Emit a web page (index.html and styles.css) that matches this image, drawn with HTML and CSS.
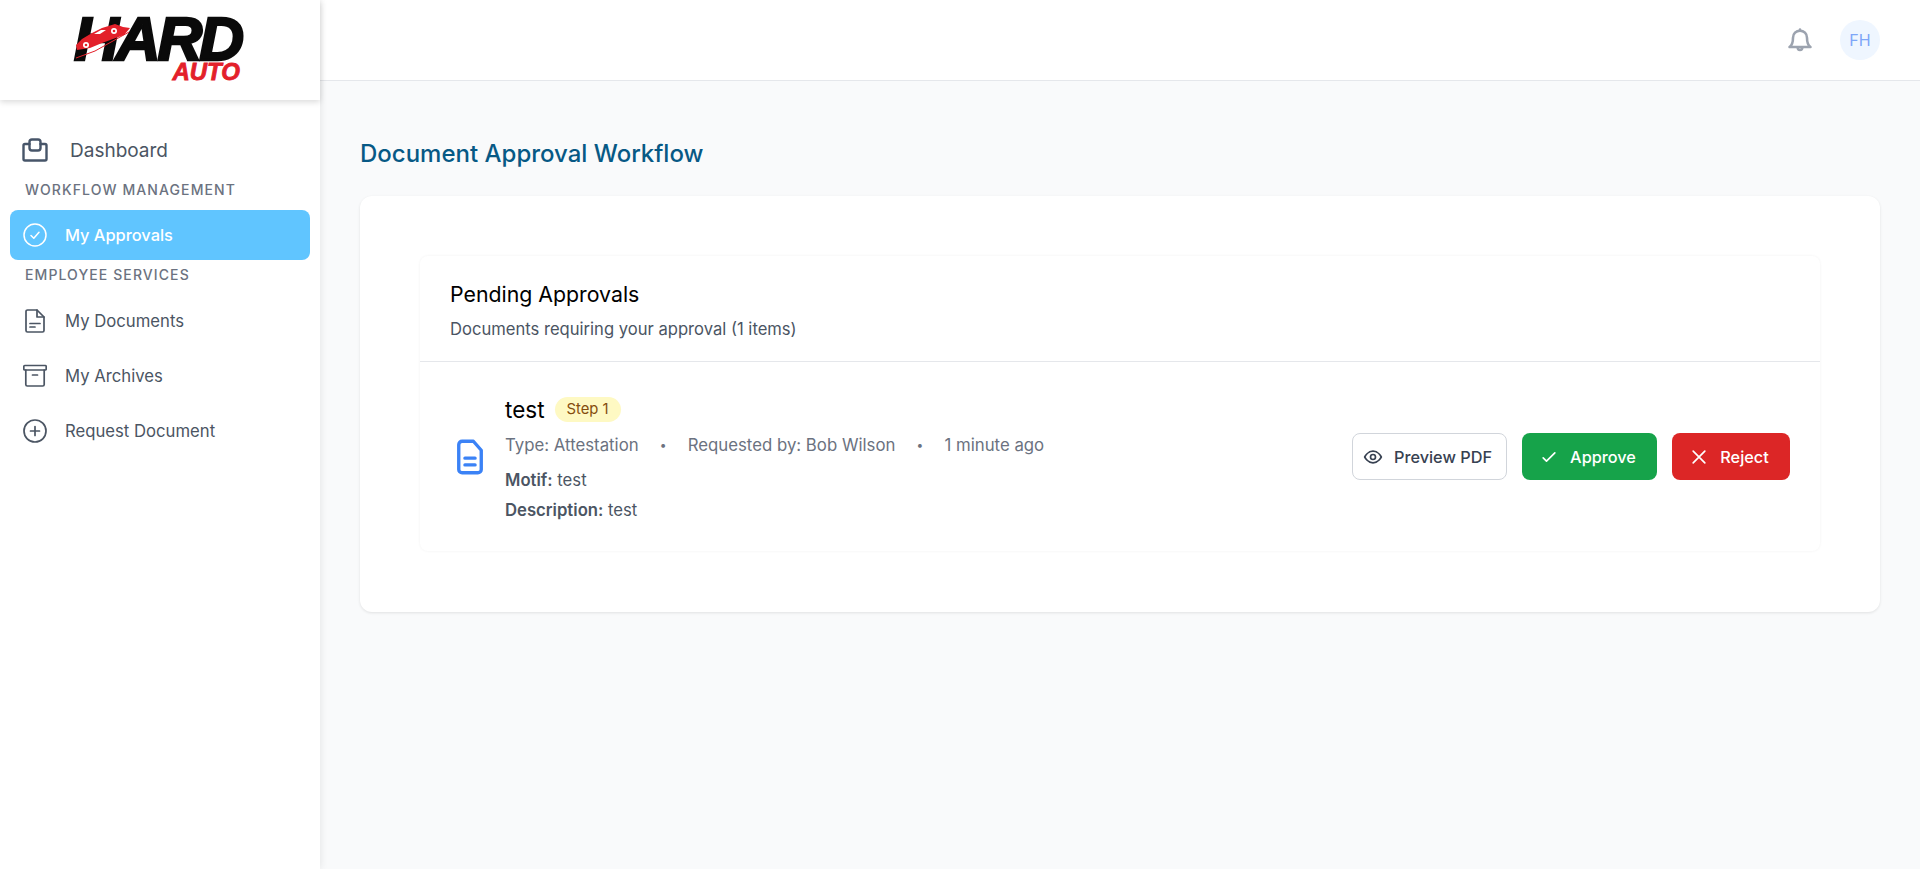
FILE: index.html
```html
<!DOCTYPE html>
<html lang="en">
<head>
<meta charset="UTF-8">
<meta name="viewport" content="width=device-width, initial-scale=1.0">
<title>Document Approval Workflow</title>
<link rel="stylesheet" href="styles.css">
</head>
<body>
  <aside class="sidebar">
    <div class="logo-box">
      <div class="logo">
        <span class="logo-hard">HARD</span>
        <span class="logo-auto">AUTO</span>
        <svg class="logo-car" viewBox="0 0 56 36" aria-hidden="true">
          <path d="M1 21 L7 15 L17 9 L27 4 L40 0 L48 3 L55 4 L49 11 L27 19 L15 24 L2 26 Z" fill="#e3202a"/>
          <path d="M1 34 L20 27 L54 8" fill="none" stroke="#e3202a" stroke-width="1"/>
          <path d="M19 10 L26 6 L31 6 L25 10 Z" fill="#fff"/>
          <circle cx="11" cy="21" r="3" fill="#fff"/>
          <circle cx="11" cy="21" r="1.3" fill="#e3202a"/>
          <circle cx="39" cy="7" r="3" fill="#fff"/>
          <circle cx="39" cy="7" r="1.3" fill="#e3202a"/>
        </svg>
      </div>
    </div>
    <nav class="nav">
      <a class="nav-top">
        <svg class="nav-icon-lg" viewBox="0 0 26 24" fill="none" stroke="currentColor" stroke-width="2.4" stroke-linejoin="round" stroke-linecap="round">
          <path d="M7.500 6H3a1.500 1.500 0 0 0-1.500 1.500V21A1.500 1.500 0 0 0 3 22.500h20a1.500 1.500 0 0 0 1.500-1.500V7.500A1.500 1.500 0 0 0 23 6h-4.500"/>
          <rect x="7.500" y="1.500" width="11" height="11" rx="2.500"/>
        </svg>
        <span>Dashboard</span>
      </a>
      <div class="nav-label first">Workflow Management</div>
      <a class="nav-item active">
        <svg class="nav-icon" viewBox="0 0 24 24" fill="none" stroke="currentColor" stroke-width="1.500" stroke-linecap="round" stroke-linejoin="round">
          <circle cx="12" cy="12" r="11"/>
          <path d="M8 12.500l2.800 2.800L16 9.200"/>
        </svg>
        <span>My Approvals</span>
      </a>
      <div class="nav-label">Employee Services</div>
      <a class="nav-item">
        <svg class="nav-icon" viewBox="0 0 24 24" fill="none" stroke="currentColor" stroke-width="1.700" stroke-linecap="round" stroke-linejoin="round">
          <path d="M14 1H4.500A1.500 1.500 0 0 0 3 2.500v19A1.500 1.500 0 0 0 4.500 23h15a1.500 1.500 0 0 0 1.500-1.500V8z"/>
          <path d="M14 1v7h7"/>
          <path d="M7 14.500h10M7 18h5"/>
        </svg>
        <span>My Documents</span>
      </a>
      <a class="nav-item">
        <svg class="nav-icon" viewBox="0 0 24 24" fill="none" stroke="currentColor" stroke-width="1.700" stroke-linecap="round" stroke-linejoin="round">
          <rect x="0.800" y="1.500" width="22.400" height="4.500" rx="1"/>
          <path d="M2.800 6v14.500A1.500 1.500 0 0 0 4.300 22h15.400a1.500 1.500 0 0 0 1.500-1.500V6"/>
          <path d="M9.500 11h5"/>
        </svg>
        <span>My Archives</span>
      </a>
      <a class="nav-item">
        <svg class="nav-icon" viewBox="0 0 24 24" fill="none" stroke="currentColor" stroke-width="1.700" stroke-linecap="round">
          <circle cx="12" cy="12" r="11"/>
          <path d="M12 7.500v9M7.500 12h9"/>
        </svg>
        <span>Request Document</span>
      </a>
    </nav>
  </aside>

  <div class="main">
    <header class="topbar">
      <svg class="bell" viewBox="0 0 24 24" fill="none" stroke="currentColor" stroke-width="2.200" stroke-linecap="round" stroke-linejoin="round">
        <path d="M18 10a6 6 0 0 0-12 0c0 5-1.500 7-3 8h18c-1.500-1-3-3-3-8z"/>
        <path d="M10 18.500a2 2 0 0 0 4 0"/>
        <path d="M12 4V3"/>
      </svg>
      <div class="avatar">FH</div>
    </header>

    <main class="content">
      <h1 class="page-title">Document Approval Workflow</h1>
      <section class="panel">
        <div class="approvals">
          <div class="approvals-head">
            <h2>Pending Approvals</h2>
            <p>Documents requiring your approval (1 items)</p>
          </div>
          <div class="doc-row">
            <svg class="doc-icon" viewBox="0 0 24 32" fill="none" stroke="currentColor" stroke-width="3" stroke-linecap="round" stroke-linejoin="round">
              <path d="M15 2H5a3 3 0 0 0-3 3v22a3 3 0 0 0 3 3h14a3 3 0 0 0 3-3V10z"/>
              <path d="M7.500 17h9M7.500 23h9"/>
            </svg>
            <div class="doc-info">
              <div class="doc-title">
                <h3>test</h3>
                <span class="badge">Step 1</span>
              </div>
              <div class="doc-meta">
                <span>Type: Attestation</span>
                <span class="dot">•</span>
                <span>Requested by: Bob Wilson</span>
                <span class="dot">•</span>
                <span>1 minute ago</span>
              </div>
              <p class="doc-line"><b>Motif:</b> test</p>
              <p class="doc-line"><b>Description:</b> test</p>
            </div>
            <div class="doc-actions">
              <button class="btn btn-outline">
                <svg viewBox="0 0 24 24" fill="none" stroke="currentColor" stroke-width="2" stroke-linecap="round" stroke-linejoin="round">
                  <path d="M2 12s3.600-7 10-7 10 7 10 7-3.600 7-10 7-10-7-10-7z"/>
                  <circle cx="12" cy="12" r="3"/>
                </svg>
                Preview PDF
              </button>
              <button class="btn btn-green">
                <svg viewBox="0 0 24 24" fill="none" stroke="currentColor" stroke-width="2" stroke-linecap="round" stroke-linejoin="round">
                  <path d="M5 13l4 4L19 7"/>
                </svg>
                Approve
              </button>
              <button class="btn btn-red">
                <svg viewBox="0 0 24 24" fill="none" stroke="currentColor" stroke-width="2" stroke-linecap="round" stroke-linejoin="round">
                  <path d="M5 5l14 14M19 5L5 19"/>
                </svg>
                Reject
              </button>
            </div>
          </div>
        </div>
      </section>
    </main>
  </div>
</body>
</html>
```

FILE: styles.css
```css
* {
  box-sizing: border-box;
}

body {
  margin: 0;
  height: 100vh;
  display: flex;
  overflow: hidden;
  background-color: #f9fafb;
  font-family: Inter, "Open Sans", sans-serif;
  color: #374151;
}

h1, h2, h3, p {
  margin: 0;
  font-weight: normal;
}

.sidebar {
  width: 320px;
  flex-shrink: 0;
  height: 100vh;
  background-color: #fff;
  box-shadow: 0 0 8px rgba(0, 0, 0, 0.1);
  position: relative;
  z-index: 2;
}

.logo-box {
  height: 100px;
  display: flex;
  justify-content: center;
  padding-top: 16px;
  box-shadow: 0 2px 6px rgba(0, 0, 0, 0.15);
}

.logo {
  position: relative;
  width: 170px;
  height: 64px;
  display: flex;
  flex-direction: column;
  align-items: flex-end;
  font-family: "Liberation Sans", Arial, sans-serif;
  font-weight: bold;
  font-style: italic;
  line-height: 1;
}

.logo-hard {
  font-size: 62px;
  height: 46px;
  line-height: 46px;
  color: #0a0a0a;
  -webkit-text-stroke: 2.5px #0a0a0a;
  letter-spacing: -3px;
  padding-right: 4px;
}

.logo-auto {
  font-size: 24px;
  height: 18px;
  line-height: 20px;
  color: #e3202a;
  -webkit-text-stroke: 0.8px #e3202a;
  padding-right: 5px;
}

.logo-car {
  position: absolute;
  left: 0;
  top: 8px;
  width: 56px;
  height: 36px;
}

.nav {
  padding: 30px 10px 0;
}

.nav-top {
  display: flex;
  align-items: center;
  gap: 22px;
  height: 40px;
  padding-left: 12px;
  font-size: 19px;
  color: #4b5563;
}

.nav-icon-lg {
  width: 26px;
  height: 24px;
  color: #475569;
}

.nav-label {
  height: 30px;
  line-height: 30px;
  margin-bottom: 6px;
  padding-left: 15px;
  font-size: 14px;
  font-weight: 500;
  letter-spacing: 1.1px;
  text-transform: uppercase;
  color: #6b7280;
}

.nav-label.first {
  margin-top: 5px;
  margin-bottom: 5px;
}

.nav-item {
  display: flex;
  align-items: center;
  gap: 18px;
  height: 50px;
  margin-bottom: 5px;
  padding-left: 13px;
  border-radius: 8px;
  font-size: 16.7px;
  color: #4b5563;
}

.nav-item.active {
  margin-bottom: 0;
  background-color: #60c5ff;
  color: #fff;
  font-size: 16.4px;
  font-weight: 500;
}

.nav-icon {
  width: 24px;
  height: 24px;
  color: #4b5563;
}

.active .nav-icon {
  color: #fff;
}

.main {
  flex: 1;
  min-width: 0;
}

.topbar {
  height: 81px;
  display: flex;
  justify-content: flex-end;
  align-items: center;
  gap: 26px;
  padding-right: 40px;
  background-color: #fff;
  border-bottom: 1px solid #e5e7eb;
}

.bell {
  width: 28px;
  height: 28px;
  color: #9ca3af;
}

.avatar {
  width: 40px;
  height: 40px;
  border-radius: 50%;
  background-color: #eff6ff;
  color: #7ea6f8;
  font-size: 16px;
  display: flex;
  align-items: center;
  justify-content: center;
}

.content {
  padding: 57px 40px 0;
}

.page-title {
  font-size: 24px;
  line-height: 32px;
  font-weight: 500;
  color: #075985;
  margin-bottom: 26px;
}

.panel {
  height: 416px;
  padding: 60px;
  background-color: #fff;
  border-radius: 12px;
  box-shadow: 0 1px 3px rgba(0, 0, 0, 0.1);
}

.approvals {
  height: 295px;
  border-radius: 8px;
  box-shadow: 0 0 3px rgba(0, 0, 0, 0.06);
}

.approvals-head {
  height: 106px;
  padding: 24px 30px 0;
  border-bottom: 1px solid #e5e7eb;
}

.approvals-head h2 {
  font-size: 21.3px;
  line-height: 28px;
  color: #000;
}

.approvals-head p {
  margin-top: 9px;
  font-size: 16.6px;
  line-height: 24px;
  color: #4b5563;
}

.doc-row {
  display: flex;
  align-items: center;
  height: 189px;
  padding: 0 30px 0 36px;
}

.doc-icon {
  width: 28px;
  height: 36px;
  flex-shrink: 0;
  color: #3b82f6;
}

.doc-info {
  flex: 1;
  padding: 7px 0 0 21px;
}

.doc-title {
  display: flex;
  align-items: center;
  gap: 10px;
  margin-bottom: 7px;
}

.doc-title h3 {
  font-size: 22.5px;
  line-height: 28px;
  color: #000;
}

.badge {
  padding: 0 12px;
  height: 25px;
  line-height: 25px;
  border-radius: 13px;
  background-color: #fef9c3;
  color: #854d0e;
  font-size: 14.8px;
}

.doc-meta {
  display: flex;
  gap: 20px;
  margin-bottom: 6px;
  font-size: 16.8px;
  line-height: 28px;
  color: #6b7280;
}

.dot {
  width: 9px;
  text-align: center;
  font-size: 12px;
}

.doc-line {
  font-size: 16.7px;
  line-height: 30px;
  color: #4b5563;
}

.doc-line b {
  font-weight: 600;
}

.doc-actions {
  display: flex;
  gap: 15px;
}

.btn {
  display: flex;
  align-items: center;
  justify-content: center;
  gap: 11px;
  height: 47px;
  padding: 0 4px 0 0;
  border-radius: 8px;
  border: none;
  font-family: inherit;
  font-size: 16.3px;
  font-weight: 500;
  color: #fff;
}

.btn svg {
  width: 20px;
  height: 20px;
}

.btn-outline {
  width: 155px;
  background-color: #fff;
  border: 1px solid #d1d5db;
  color: #374151;
}

.btn-green {
  width: 135px;
  background-color: #16a34a;
}

.btn-red {
  width: 118px;
  background-color: #dc2626;
}
```
